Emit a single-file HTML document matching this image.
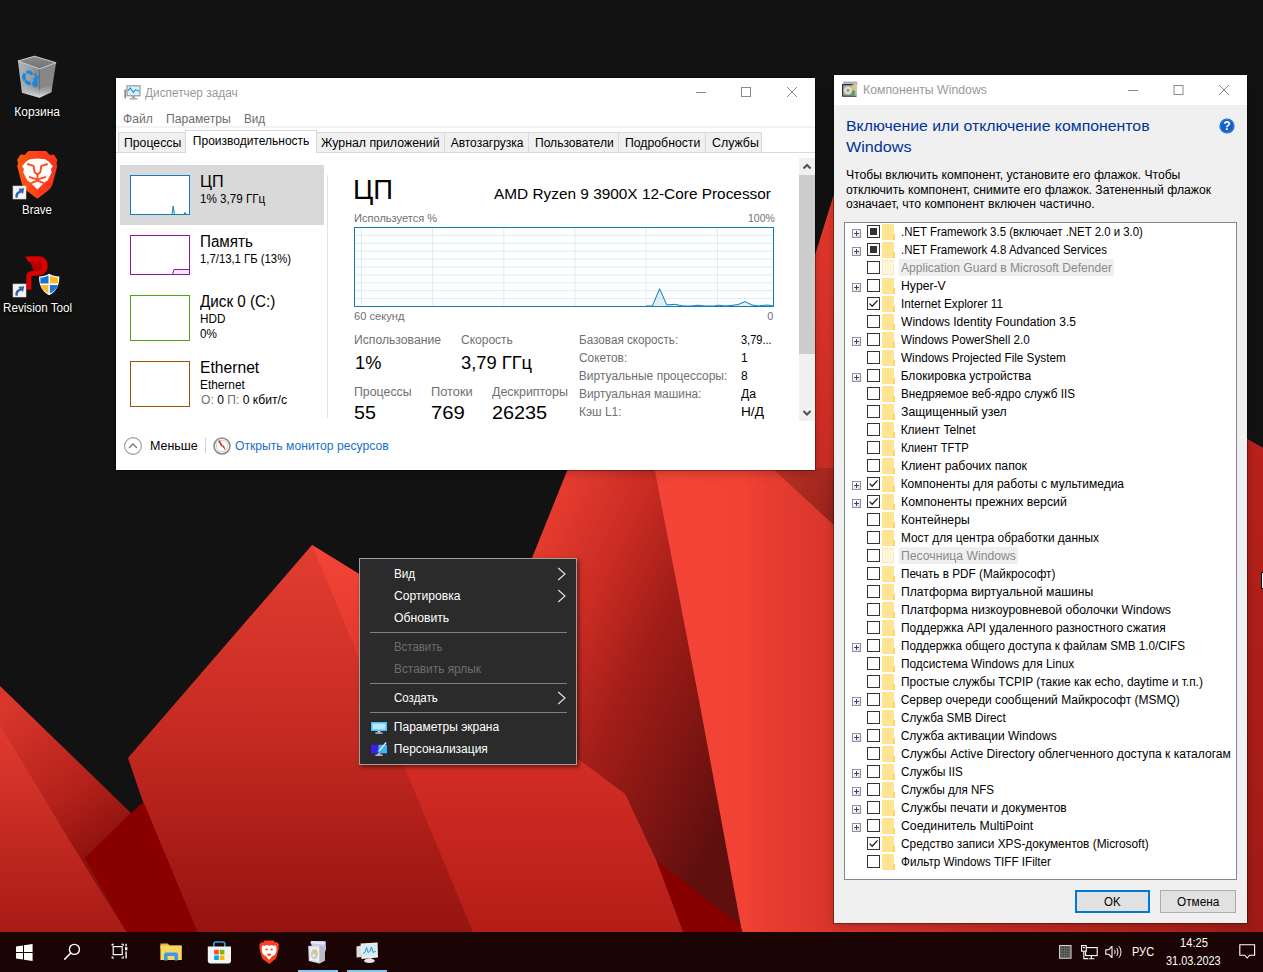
<!DOCTYPE html>
<html lang="ru"><head><meta charset="utf-8"><title>Desktop</title>
<style>
html,body{margin:0;padding:0}
body{width:1263px;height:972px;overflow:hidden;position:relative;background:#121212;
font-family:"Liberation Sans",sans-serif;font-size:12px;color:#000}
.a{position:absolute;box-sizing:border-box}
.t{position:absolute;white-space:nowrap;line-height:1;transform-origin:0 0}
svg{position:absolute;overflow:visible}
.win{position:absolute;box-sizing:border-box;background:#fff;box-shadow:0 0 0 1px rgba(0,0,0,.32),0 2px 10px rgba(0,0,0,.24)}
.ds{text-shadow:0 1px 2px rgba(0,0,0,.95),0 0 3px rgba(0,0,0,.8)}
</style></head>
<body>

<svg width="1263" height="972" viewBox="0 0 1263 972" style="left:0;top:0">
<defs>
<linearGradient id="gA" gradientUnits="userSpaceOnUse" x1="570" y1="480" x2="830" y2="605">
<stop offset="0" stop-color="#e53b2f"/><stop offset=".25" stop-color="#c92c23"/><stop offset=".5" stop-color="#a11d18"/><stop offset=".78" stop-color="#7c1512"/><stop offset="1" stop-color="#5e0f0e"/></linearGradient>
<linearGradient id="gB" gradientUnits="userSpaceOnUse" x1="660" y1="0" x2="1263" y2="0">
<stop offset="0" stop-color="#f34437"/><stop offset="0.141" stop-color="#f14235"/><stop offset="0.179" stop-color="#e73d31"/><stop offset="0.289" stop-color="#d9352b"/><stop offset="1" stop-color="#a31c16"/></linearGradient>
<linearGradient id="gD" gradientUnits="userSpaceOnUse" x1="800" y1="200" x2="860" y2="480">
<stop offset="0" stop-color="#e4382d"/><stop offset="1" stop-color="#c92c23"/></linearGradient>
<linearGradient id="gT" gradientUnits="userSpaceOnUse" x1="780" y1="470" x2="850" y2="520">
<stop offset="0" stop-color="#bb3025"/><stop offset="1" stop-color="#8e1f18"/></linearGradient>
<linearGradient id="gCR" gradientUnits="userSpaceOnUse" x1="0" y1="545" x2="0" y2="932">
<stop offset="0" stop-color="#f44437"/><stop offset=".45" stop-color="#da3129"/><stop offset="1" stop-color="#b41d17"/></linearGradient>
<linearGradient id="gCL" gradientUnits="userSpaceOnUse" x1="0" y1="545" x2="0" y2="932">
<stop offset="0" stop-color="#e33d31"/><stop offset=".5" stop-color="#c42a22"/><stop offset=".8" stop-color="#a81b16"/><stop offset="1" stop-color="#951411"/></linearGradient>
<linearGradient id="gLL" gradientUnits="userSpaceOnUse" x1="0" y1="720" x2="0" y2="932">
<stop offset="0" stop-color="#e23c30"/><stop offset="1" stop-color="#a81a15"/></linearGradient>
<linearGradient id="gLS" gradientUnits="userSpaceOnUse" x1="10" y1="700" x2="110" y2="850">
<stop offset="0" stop-color="#d9372c"/><stop offset=".6" stop-color="#b5221b"/><stop offset="1" stop-color="#8c100d"/></linearGradient>
<linearGradient id="gR2" gradientUnits="userSpaceOnUse" x1="1247" y1="440" x2="1247" y2="932">
<stop offset="0" stop-color="#b9211b"/><stop offset="1" stop-color="#a01a15"/></linearGradient>
</defs>
<rect width="1263" height="972" fill="#121212"/>
<!-- big right crystal -->
<polygon points="834,194 815,255 748,470 655,470 655,932 1263,932 1263,448 1247,439 1247,194" fill="url(#gD)"/>
<polygon points="650,468 1263,468 1263,932 738,932 695,700" fill="url(#gB)"/>
<polygon points="1247,439 1263,448 1263,932 1247,932" fill="url(#gR2)"/>
<polygon points="772,468 850,540 850,468" fill="url(#gT)"/>
<polygon points="575,452 651,452 655,471 699,700 742,932 738,928 650,864 619,798 572,764 492,656 532,558 567,471" fill="url(#gA)"/>
<!-- dark wedge bottom -->
<polygon points="650,858 656,860 740,925 742.5,932 677,932" fill="#870000"/>
<!-- central crystal -->
<polygon points="312,545 492,656 578,759 625,794 656,860 683,932 197,932 143,802 128,758" fill="url(#gCL)"/>
<polygon points="312,545 492,656 578,759 625,794 656,860 683,932 473,932" fill="url(#gCR)"/>
<!-- dark red between -->
<polygon points="131,813 143.5,802 197.5,932 126.5,932 85,858" fill="#8a0000"/>
<!-- left crystal -->
<polygon points="0,686 131,813 85,858 126.5,932 0,932" fill="url(#gLS)"/>
<path d="M0,726 C40,790 80,860 126.5,932 L0,932 Z" fill="url(#gLL)"/>
</svg>
<svg width="44" height="48" viewBox="14 52 44 48" style="left:14px;top:52px">
<defs>
<linearGradient id="rb1" x1="0" y1="0" x2="1" y2="0"><stop offset="0" stop-color="#bfc3c6"/><stop offset=".55" stop-color="#a9adb0"/><stop offset="1" stop-color="#8d9194"/></linearGradient>
<linearGradient id="rb2" x1="0" y1="0" x2="0" y2="1"><stop offset="0" stop-color="#8a8d90"/><stop offset="1" stop-color="#6f7275"/></linearGradient>
<linearGradient id="rb3" x1="0" y1="0" x2="0" y2="1"><stop offset="0" stop-color="#aeb2b5" stop-opacity="0"/><stop offset="1" stop-color="#e8eaec" stop-opacity=".9"/></linearGradient>
</defs>
<polygon points="17.9,61 39.5,68.9 39.5,97.7 22,92.7" fill="url(#rb1)" opacity=".92"/>
<polygon points="39.5,68.9 56.1,62.7 51.4,92.3 39.5,97.7" fill="#8f9396" opacity=".92"/>
<polygon points="20.8,84 39.5,89 52.4,84.5 51.4,92.3 39.5,97.7 22,92.7" fill="url(#rb3)"/>
<polygon points="17.9,61 34.6,56.2 56.1,62.7 39.5,68.9" fill="url(#rb2)" stroke="#d9dcde" stroke-width=".9" stroke-linejoin="round"/>
<g fill="#1687e0" transform="translate(29.6 79.2) scale(1.14) translate(-29.6 -78)" stroke="#1687e0" stroke-width=".5" stroke-linejoin="round">
<path d="M26.5 71.3 l3.6 -1 l2.6 3.2 l-2.2 .8 l-1.4 -1.7 l-1.7 .5 z"/>
<path d="M24.3 72.6 l-1.4 3.4 l1.6 3.6 l2 -1.3 l-.9 -2.3 l.9 -2.2 z"/>
<path d="M25.3 80.8 l2.9 2 l2.3 .2 l-.2 -2.6 l-2.3 -.6 l-1.4 -1 z"/>
<path d="M31.8 81.6 l1.6 3.2 l3.2 -1.2 l-.3 -4 l-2 -1.6 z"/>
<path d="M33.4 73.3 l1.8 3.2 l-2.6 1.1 l3.6 1.3 l1.3 -3.8 l-1.4 .6 l-1.2 -2.9 z"/>
</g>
</svg><div class="t ds" style="top:105.64px;font-size:12px;color:#fff;left:14.24px;">Корзина</div><svg width="42" height="49" viewBox="16 150 42 49" style="left:16px;top:150px">
<defs><linearGradient id="bv1" x1="0" y1="0" x2="1" y2="0"><stop offset="0" stop-color="#ff5a0a"/><stop offset=".5" stop-color="#fd3f1c"/><stop offset="1" stop-color="#f8311e"/></linearGradient></defs>
<path d="M28.3 151 L46.2 151 L49.8 155 L54 154.6 L57.4 160 L56.4 163.2 L57.3 166 L53 182.5 C52.2 186 50.5 188.8 47.5 191 L37.3 198.8 L27 191 C24 188.8 22.3 186 21.5 182.5 L17.2 166 L18.1 163.2 L17.1 160 L20.5 154.6 L24.7 155 Z" fill="url(#bv1)"/>
<polygon points="37.0,158.6 45.1,159.3 48.7,161.6 52.8,166.2 50.9,169.0 51.7,172.3 49.2,177.2 47.6,180.5 44.4,182.5 37.4,189.4 30.5,182.5 27.3,180.5 25.7,177.2 23.2,172.3 24.0,169.0 22.1,166.2 26.2,161.6 29.8,159.3" fill="#fff"/>
<path d="M27.2 164.0 L33.6 165.8 L34.6 172.3 L37.4 174.6 L40.3 172.3 L41.3 165.8 L47.7 164.0" stroke="#fb4a1c" stroke-width="1.9" fill="none" stroke-linejoin="round"/>
<path d="M37.4 174.6 L37.4 179.3" stroke="#fb4a1c" stroke-width="1.9" fill="none" stroke-linejoin="round"/>
<path d="M29.0 176.9 L37.4 179.7 L45.9 176.9" stroke="#fb4a1c" stroke-width="1.9" fill="none" stroke-linejoin="round"/>
<path d="M31.1 183.1 L37.4 180.7 L43.8 183.1" stroke="#fb4a1c" stroke-width="1.9" fill="none" stroke-linejoin="round"/>
</svg><svg width="13" height="13" viewBox="0 0 13 13" style="left:13px;top:186px">
<rect x="0" y="0" width="13" height="13" fill="#f4f4f4" stroke="#cfcfcf" stroke-width=".6"/>
<path d="M2.6 11.8 C1.8 8.2 3.4 5.8 6.6 4.8 L5.4 2.8 L11.2 2.2 L10 8 L8.4 6.4 C5.8 7 4.4 8.8 4.8 11.8 Z" fill="#2d64b3"/>
</svg><div class="t ds" style="top:203.54px;font-size:12px;color:#fff;left:22.26px;transform:scaleX(0.9569);">Brave</div><svg width="38" height="42" viewBox="23 255 38 42" style="left:23px;top:255px">
<path d="M25.1 256.6 L38 256.2 C44.5 256.4 47.9 260.4 47.7 266 C47.5 271.8 43.6 275.2 38.4 275.6 L33.4 275.8 C32 275.9 31.4 276.6 31.4 278 L31.4 289.8 L26.4 289.8 L26.4 276.6 C26.4 273 28.4 271 32 270.9 L36.8 270.7 C39.8 270.5 41.6 268.8 41.6 266.2 C41.6 263.4 39.8 261.8 36.8 261.8 L28.5 261.9 Z" fill="#dc0000"/>
<path d="M30.2 261.9 L36.8 261.8 C39.8 261.8 41.6 263.4 41.6 266.2 C41.6 268.8 39.8 270.5 36.8 270.7 L33.6 270.8 Z" fill="#b80000"/>
<path d="M49.2 273.8 C52.4 275.6 55.8 276.4 59.3 276.4 C59.6 285 56.4 291.4 49.2 295.2 C42 291.4 38.8 285 39.1 276.4 C42.6 276.4 46 275.6 49.2 273.8 Z" fill="#fff"/>
<path d="M48.5 275.4 C45.8 276.7 43.2 277.4 40.4 277.6 L40.4 283.6 L48.5 283.6 Z" fill="#1c73d4"/>
<path d="M49.9 275.4 C52.6 276.7 55.2 277.4 58 277.6 L58 283.6 L49.9 283.6 Z" fill="#fdb92a"/>
<path d="M40.5 285 L48.5 285 L48.5 293.6 C44 291.2 41.4 288.6 40.5 285 Z" fill="#fdb92a"/>
<path d="M57.9 285 L49.9 285 L49.9 293.6 C54.4 291.2 57 288.6 57.9 285 Z" fill="#1c73d4"/>
</svg><svg width="13" height="13" viewBox="0 0 13 13" style="left:13px;top:284px">
<rect x="0" y="0" width="13" height="13" fill="#f4f4f4" stroke="#cfcfcf" stroke-width=".6"/>
<path d="M2.6 11.8 C1.8 8.2 3.4 5.8 6.6 4.8 L5.4 2.8 L11.2 2.2 L10 8 L8.4 6.4 C5.8 7 4.4 8.8 4.8 11.8 Z" fill="#2d64b3"/>
</svg><div class="t ds" style="top:301.64px;font-size:12px;color:#fff;left:2.55px;transform:scaleX(0.9708);">Revision Tool</div><div class="win" style="left:116px;top:78px;width:699px;height:392px"></div><svg width="17" height="16" viewBox="0 0 17 16" style="left:124px;top:85px">
<rect x="0.3" y="4.5" width="1.8" height="8.8" fill="#8a9296"/>
<rect x="3" y="0.8" width="13" height="10" fill="#d7f0fa" stroke="#8a9296" stroke-width="1.1"/>
<path d="M4 5.6 l2.2 -2.6 l3 4.4 l2.4 -2.8 l3.4 1.6" stroke="#2a8fd0" stroke-width="1.1" fill="none"/>
<rect x="8" y="11.2" width="3" height="2" fill="#9aa2a6"/>
<rect x="5.5" y="13" width="8" height="1.6" fill="#aeb5b8"/>
</svg><div class="t" style="top:87.44px;font-size:12px;color:#999;left:145.24px;transform:scaleX(0.9872);">Диспетчер задач</div><svg width="120" height="20" viewBox="691 82 120 20" style="left:691px;top:82px"><path d="M696 92.5 h10" stroke="#8a8a8a" stroke-width="1" fill="none"/><rect x="741.5" y="87.5" width="9" height="9" stroke="#8a8a8a" stroke-width="1" fill="none"/><path d="M787 87 l10 10 M797 87 l-10 10" stroke="#8a8a8a" stroke-width="1" fill="none"/></svg><div class="t" style="top:112.74px;font-size:12px;color:#6d6d6d;left:123.24px;transform:scaleX(1.0065);">Файл</div><div class="t" style="top:112.74px;font-size:12px;color:#6d6d6d;left:165.84px;transform:scaleX(1.0113);">Параметры</div><div class="t" style="top:112.74px;font-size:12px;color:#6d6d6d;left:243.65px;transform:scaleX(0.9765);">Вид</div><div class="a" style="left:116px;top:126px;width:699px;height:2px;background:#f3f3f3"></div><div class="a" style="left:116px;top:152px;width:699px;height:1px;background:#d9d9d9"></div><div class="a" style="left:118px;top:132px;width:68px;height:21px;background:#f0f0f0;border:1px solid #d9d9d9"></div><div class="t" style="top:136.54px;font-size:12px;color:#000;left:124.13px;transform:scaleX(1.0211);">Процессы</div><div class="a" style="left:316px;top:132px;width:129px;height:21px;background:#f0f0f0;border:1px solid #d9d9d9"></div><div class="t" style="top:136.54px;font-size:12px;color:#000;left:320.63px;transform:scaleX(1.0274);">Журнал приложений</div><div class="a" style="left:444px;top:132px;width:85px;height:21px;background:#f0f0f0;border:1px solid #d9d9d9"></div><div class="t" style="top:136.54px;font-size:12px;color:#000;left:450.64px;">Автозагрузка</div><div class="a" style="left:528px;top:132px;width:91px;height:21px;background:#f0f0f0;border:1px solid #d9d9d9"></div><div class="t" style="top:136.54px;font-size:12px;color:#000;left:535.14px;transform:scaleX(1.0045);">Пользователи</div><div class="a" style="left:618px;top:132px;width:88px;height:21px;background:#f0f0f0;border:1px solid #d9d9d9"></div><div class="t" style="top:136.54px;font-size:12px;color:#000;left:624.93px;transform:scaleX(1.0207);">Подробности</div><div class="a" style="left:705px;top:132px;width:57px;height:21px;background:#f0f0f0;border:1px solid #d9d9d9"></div><div class="t" style="top:136.54px;font-size:12px;color:#000;left:711.93px;transform:scaleX(1.0292);">Службы</div><div class="a" style="left:185px;top:130px;width:132px;height:23px;background:#fff;border:1px solid #d9d9d9;border-bottom:none"></div><div class="t" style="top:134.54px;font-size:12px;color:#000;left:192.84px;">Производительность</div><div class="a" style="left:120px;top:165px;width:204px;height:60px;background:#d9d9d9"></div><div class="a" style="left:327px;top:175px;width:1px;height:243px;background:#e3e3e3"></div><div class="a" style="left:130px;top:175px;width:60px;height:40px;background:#fff;border:1px solid #117dbb"></div><svg width="60" height="40" viewBox="0 0 60 40" style="left:130px;top:175px">
<path d="M1 39.5 L42 39.5 L43.2 31 L44.4 39.5 L54 39.5 L55 37.4 L56 39.5 L59 39.5" stroke="#117dbb" stroke-width="1" fill="none"/></svg><div class="a" style="left:130px;top:235px;width:60px;height:40px;background:#fff;border:1px solid #8b12ae"></div><svg width="60" height="40" viewBox="0 0 60 40" style="left:130px;top:235px">
<path d="M42.5 39.5 L44 34.5 L59.5 34.5 L59.5 39.5 Z" fill="#f4e6f8" stroke="#8b12ae" stroke-width="1"/></svg><div class="a" style="left:130px;top:295px;width:60px;height:46px;background:#fff;border:1px solid #4da60c"></div><div class="a" style="left:130px;top:361px;width:60px;height:46px;background:#fff;border:1px solid #a74f01"></div><div class="t" style="top:174.46px;font-size:16px;color:#000;left:200.11px;transform:scaleX(1.0113);">ЦП</div><div class="t" style="top:193.24px;font-size:12px;color:#000;left:200.45px;transform:scaleX(0.9709);">1% 3,79 ГГц</div><div class="t" style="top:234.26px;font-size:16px;color:#000;left:200.14px;transform:scaleX(0.9493);">Память</div><div class="t" style="top:253.04px;font-size:12px;color:#000;left:200.46px;transform:scaleX(0.9435);">1,7/13,1 ГБ (13%)</div><div class="t" style="top:294.06px;font-size:16px;color:#000;left:200.14px;transform:scaleX(0.9518);">Диск 0 (C:)</div><div class="t" style="top:312.54px;font-size:12px;color:#000;left:200.45px;transform:scaleX(0.9768);">HDD</div><div class="t" style="top:327.64px;font-size:12px;color:#000;left:200.45px;transform:scaleX(0.9742);">0%</div><div class="t" style="top:360.06px;font-size:16px;color:#000;left:200.13px;transform:scaleX(0.9788);">Ethernet</div><div class="t" style="top:379.14px;font-size:12px;color:#000;left:200.44px;transform:scaleX(0.9873);">Ethernet</div><div class="t" style="left:200.8px;top:394.24px;font-size:12px;transform:scaleX(1.0088)"><span style="color:#707070">О:</span> 0 <span style="color:#707070">П:</span> 0 кбит/с</div><div class="a" style="left:799px;top:158px;width:16px;height:263px;background:#f0f0f0"></div><div class="a" style="left:799px;top:175px;width:16px;height:179px;background:#cdcdcd"></div><svg width="16" height="263" viewBox="0 0 16 263" style="left:799px;top:158px">
<path d="M4.5 10.5 L8 7 L11.5 10.5" stroke="#505050" stroke-width="2" fill="none"/>
<path d="M4.5 253 L8 256.5 L11.5 253" stroke="#505050" stroke-width="2" fill="none"/></svg><div class="t" style="top:177.04px;font-size:27px;color:#000;left:353.48px;transform:scaleX(1.0158);">ЦП</div><div class="t" style="top:186.96px;font-size:14.7px;color:#000;left:493.74px;transform:scaleX(1.0471);">AMD Ryzen 9 3900X 12-Core Processor</div><div class="t" style="top:212.89px;font-size:11px;color:#707070;left:353.97px;transform:scaleX(1.0056);">Используется %</div><div class="t" style="top:213.09px;font-size:11px;color:#707070;left:747.69px;transform:scaleX(0.9526);">100%</div><svg width="420" height="80" viewBox="354 227 420 80" style="left:354px;top:227px"><rect x="354.5" y="227.5" width="419" height="79" fill="#fff"/><path d="M355 235.4 H773" stroke="#dcecf6" stroke-width="1"/><path d="M355 243.3 H773" stroke="#dcecf6" stroke-width="1"/><path d="M355 251.2 H773" stroke="#dcecf6" stroke-width="1"/><path d="M355 259.1 H773" stroke="#dcecf6" stroke-width="1"/><path d="M355 267.0 H773" stroke="#dcecf6" stroke-width="1"/><path d="M355 274.9 H773" stroke="#dcecf6" stroke-width="1"/><path d="M355 282.8 H773" stroke="#dcecf6" stroke-width="1"/><path d="M355 290.7 H773" stroke="#dcecf6" stroke-width="1"/><path d="M355 298.6 H773" stroke="#dcecf6" stroke-width="1"/><path d="M361.4 228 V306" stroke="#dcecf6" stroke-width="1"/><path d="M432.6 228 V306" stroke="#dcecf6" stroke-width="1"/><path d="M503.8 228 V306" stroke="#dcecf6" stroke-width="1"/><path d="M575.0 228 V306" stroke="#dcecf6" stroke-width="1"/><path d="M646.2 228 V306" stroke="#dcecf6" stroke-width="1"/><path d="M717.4 228 V306" stroke="#dcecf6" stroke-width="1"/><path d="M646 306 L652.4 306 L659.6 288.7 L666.8 305 L674.9 304.3 L683 306 L692 306 L698 305.2 L704 306 L714 306 L719 305.2 L724 306 L730 305.6 L738 304.6 L745 301.6 L752 305 L758 306 L763 305.4 L768 305 L773 306 L773 306.5 L646 306.5 Z" fill="#117dbb" fill-opacity=".12" stroke="none"/><path d="M646 306 L652.4 306 L659.6 288.7 L666.8 305 L674.9 304.3 L683 306 L692 306 L698 305.2 L704 306 L714 306 L719 305.2 L724 306 L730 305.6 L738 304.6 L745 301.6 L752 305 L758 306 L763 305.4 L768 305 L773 306" stroke="#117dbb" stroke-width="1" fill="none"/><rect x="354.5" y="227.5" width="419" height="79" fill="none" stroke="#117dbb" stroke-width="1"/></svg><div class="t" style="top:310.69px;font-size:11px;color:#707070;left:353.97px;transform:scaleX(1.0113);">60 секунд</div><div class="t" style="top:310.69px;font-size:11px;color:#707070;left:767.17px;">0</div><div class="t" style="top:334.44px;font-size:12px;color:#707070;left:353.93px;transform:scaleX(1.0143);">Использование</div><div class="t" style="top:334.44px;font-size:12px;color:#707070;left:461.04px;">Скорость</div><div class="t" style="top:353.97px;font-size:18.7px;color:#000;left:354.95px;transform:scaleX(0.9756);">1%</div><div class="t" style="top:353.97px;font-size:18.7px;color:#000;left:460.85px;transform:scaleX(0.9808);">3,79 ГГц</div><div class="t" style="top:386.14px;font-size:12px;color:#707070;left:353.93px;transform:scaleX(1.0282);">Процессы</div><div class="t" style="top:386.14px;font-size:12px;color:#707070;left:431.12px;transform:scaleX(1.0684);">Потоки</div><div class="t" style="top:386.14px;font-size:12px;color:#707070;left:491.83px;transform:scaleX(1.0358);">Дескрипторы</div><div class="t" style="top:403.97px;font-size:18.7px;color:#000;left:354.41px;transform:scaleX(1.0513);">55</div><div class="t" style="top:403.97px;font-size:18.7px;color:#000;left:431.39px;transform:scaleX(1.0854);">769</div><div class="t" style="top:403.97px;font-size:18.7px;color:#000;left:492.00px;transform:scaleX(1.0608);">26235</div><div class="t" style="top:333.84px;font-size:12px;color:#707070;left:578.85px;transform:scaleX(0.9752);">Базовая скорость:</div><div class="t" style="top:333.84px;font-size:12px;color:#000;left:741.07px;transform:scaleX(0.9170);">3,79...</div><div class="t" style="top:351.84px;font-size:12px;color:#707070;left:578.84px;transform:scaleX(0.9886);">Сокетов:</div><div class="t" style="top:351.84px;font-size:12px;color:#000;left:741.04px;">1</div><div class="t" style="top:369.84px;font-size:12px;color:#707070;left:578.84px;">Виртуальные процессоры:</div><div class="t" style="top:369.84px;font-size:12px;color:#000;left:741.04px;">8</div><div class="t" style="top:387.84px;font-size:12px;color:#707070;left:578.84px;transform:scaleX(0.9903);">Виртуальная машина:</div><div class="t" style="top:387.84px;font-size:12px;color:#000;left:741.04px;transform:scaleX(1.0064);">Да</div><div class="t" style="top:405.84px;font-size:12px;color:#707070;left:578.84px;transform:scaleX(0.9937);">Кэш L1:</div><div class="t" style="top:405.84px;font-size:12px;color:#000;left:740.99px;transform:scaleX(1.1374);">Н/Д</div><svg width="20" height="20" viewBox="0 0 20 20" style="left:122.8px;top:436px">
<circle cx="10" cy="10" r="8.4" fill="#fff" stroke="#9a9a9a" stroke-width="1.1"/>
<path d="M6 12 L10 8 L14 12" stroke="#7a7a7a" stroke-width="1.3" fill="none"/></svg><div class="t" style="top:440.14px;font-size:12px;color:#000;left:150.13px;transform:scaleX(1.0370);">Меньше</div><div class="a" style="left:205px;top:438px;width:1px;height:15px;background:#d0d0d0"></div><svg width="18" height="18" viewBox="0 0 18 18" style="left:213px;top:437px">
<circle cx="9" cy="9" r="8" fill="#f4f4f4" stroke="#8c8c8c" stroke-width="1.6"/>
<circle cx="9" cy="9" r="5.6" fill="#fff" stroke="#c9c9c9" stroke-width=".8"/>
<path d="M9 9 L6 3.6" stroke="#c22" stroke-width="1.6"/>
<path d="M9 9 L12.6 13.6 L11 8.6 Z" fill="#c22"/>
</svg><div class="t" style="top:440.14px;font-size:12px;color:#1a6fc4;left:235.04px;transform:scaleX(1.0121);">Открыть монитор ресурсов</div><div class="win" style="left:834px;top:75px;width:413px;height:848px;background:#f0f0f0"></div><div class="a" style="left:834px;top:75px;width:413px;height:30px;background:#fff"></div><svg width="16" height="16" viewBox="0 0 16 16" style="left:842px;top:81px">
<path d="M2 1 L14.6 1 L15 4 L1.6 4 Z" fill="#b7b9d2" stroke="#7e8199" stroke-width=".6"/>
<rect x=".6" y="3.6" width="13.4" height="11.6" fill="#9da396" stroke="#2a2c28" stroke-width="1.1"/>
<rect x="11.6" y="3" width="3.6" height="11.6" fill="#c2c4d6"/>
<rect x="9.6" y="3.8" width="3.4" height="5" fill="#e3c94c"/>
<rect x="9.4" y="9.6" width="3.8" height="4.6" fill="#5da053"/>
<circle cx="6" cy="9.4" r="4.2" fill="#d9dcd6"/><circle cx="6" cy="9.4" r="1.3" fill="#8b9088"/>
</svg><div class="t" style="top:84.34px;font-size:12px;color:#999;left:862.93px;transform:scaleX(1.0225);">Компоненты Windows</div><svg width="120" height="20" viewBox="1123 79.5 120 20" style="left:1123px;top:79.5px"><path d="M1128 90.0 h10" stroke="#8a8a8a" stroke-width="1" fill="none"/><rect x="1174.0" y="85.0" width="9" height="9" stroke="#8a8a8a" stroke-width="1" fill="none"/><path d="M1219 84.5 l10 10 M1229 84.5 l-10 10" stroke="#8a8a8a" stroke-width="1" fill="none"/></svg><div class="t" style="top:119.36px;font-size:14.7px;color:#003399;left:846.03px;transform:scaleX(1.0771);">Включение или отключение компонентов</div><div class="t" style="top:139.96px;font-size:14.7px;color:#003399;left:846.02px;transform:scaleX(1.0996);">Windows</div><svg width="16" height="16" viewBox="0 0 16 16" style="left:1219px;top:118px">
<circle cx="8" cy="8" r="7.6" fill="#1460c8"/><circle cx="8" cy="8" r="6.6" fill="none" stroke="#3f86e0" stroke-width=".8"/>
<text x="8" y="12.2" font-family="Liberation Sans, sans-serif" font-size="12" font-weight="bold" fill="#fff" text-anchor="middle">?</text></svg><div class="t" style="top:169.04px;font-size:12px;color:#000;left:846.14px;transform:scaleX(1.0115);">Чтобы включить компонент, установите его флажок. Чтобы</div><div class="t" style="top:183.54px;font-size:12px;color:#000;left:846.13px;transform:scaleX(1.0147);">отключить компонент, снимите его флажок. Затененный флажок</div><div class="t" style="top:198.14px;font-size:12px;color:#000;left:846.13px;transform:scaleX(1.0216);">означает, что компонент включен частично.</div><div class="a" style="left:844px;top:222px;width:393px;height:658px;background:#fff;border:1px solid #828790"></div><div class="a" style="left:852px;top:229px;width:9px;height:9px;border:1px solid #919191;background:linear-gradient(135deg,#fff 30%,#d6d6d6)"></div><div class="a" style="left:854px;top:233px;width:5px;height:1px;background:#34457a"></div><div class="a" style="left:856px;top:231px;width:1px;height:5px;background:#34457a"></div><div class="a" style="left:867px;top:225px;width:13px;height:13px;background:#fff;border:1px solid #333"></div><div class="a" style="left:870px;top:228px;width:7px;height:7px;background:#333"></div><div class="a" style="left:882px;top:224px;width:11.8px;height:15.5px;background:#ffe492"></div><div class="a" style="left:893px;top:233.5px;width:1.8px;height:6px;background:#ffd65f"></div><div class="t" style="top:226.14px;font-size:12px;color:#000;left:900.66px;transform:scaleX(0.9502);">.NET Framework 3.5 (включает .NET 2.0 и 3.0)</div><div class="a" style="left:852px;top:247px;width:9px;height:9px;border:1px solid #919191;background:linear-gradient(135deg,#fff 30%,#d6d6d6)"></div><div class="a" style="left:854px;top:251px;width:5px;height:1px;background:#34457a"></div><div class="a" style="left:856px;top:249px;width:1px;height:5px;background:#34457a"></div><div class="a" style="left:867px;top:243px;width:13px;height:13px;background:#fff;border:1px solid #333"></div><div class="a" style="left:870px;top:246px;width:7px;height:7px;background:#333"></div><div class="a" style="left:882px;top:242px;width:11.8px;height:15.5px;background:#ffe492"></div><div class="a" style="left:893px;top:251.5px;width:1.8px;height:6px;background:#ffd65f"></div><div class="t" style="top:244.14px;font-size:12px;color:#000;left:900.66px;transform:scaleX(0.9536);">.NET Framework 4.8 Advanced Services</div><div class="a" style="left:867px;top:261px;width:13px;height:13px;background:#fff;border:1px solid #333"></div><div class="a" style="left:882px;top:260px;width:12px;height:15px;background:#fff6da;border:1px dotted #f3dc97"></div><div class="a" style="left:899px;top:259px;width:214.8px;height:17px;background:#efefef"></div><div class="t" style="top:262.14px;font-size:12px;color:#8a8a8a;left:900.64px;transform:scaleX(1.0054);">Application Guard в Microsoft Defender</div><div class="a" style="left:852px;top:283px;width:9px;height:9px;border:1px solid #919191;background:linear-gradient(135deg,#fff 30%,#d6d6d6)"></div><div class="a" style="left:854px;top:287px;width:5px;height:1px;background:#34457a"></div><div class="a" style="left:856px;top:285px;width:1px;height:5px;background:#34457a"></div><div class="a" style="left:867px;top:279px;width:13px;height:13px;background:#fff;border:1px solid #333"></div><div class="a" style="left:882px;top:278px;width:11.8px;height:15.5px;background:#ffe492"></div><div class="a" style="left:893px;top:287.5px;width:1.8px;height:6px;background:#ffd65f"></div><div class="t" style="top:280.14px;font-size:12px;color:#000;left:900.63px;transform:scaleX(1.0155);">Hyper-V</div><div class="a" style="left:867px;top:297px;width:13px;height:13px;background:#fff;border:1px solid #333"></div><svg width="13" height="13" viewBox="0 0 13 13" style="left:867px;top:297px"><path d="M2.6 6.6 L5.2 9.3 L10.6 3.4" stroke="#222" stroke-width="1.35" fill="none"/></svg><div class="a" style="left:882px;top:296px;width:11.8px;height:15.5px;background:#ffe492"></div><div class="a" style="left:893px;top:305.5px;width:1.8px;height:6px;background:#ffd65f"></div><div class="t" style="top:298.14px;font-size:12px;color:#000;left:900.65px;transform:scaleX(0.9758);">Internet Explorer 11</div><div class="a" style="left:867px;top:315px;width:13px;height:13px;background:#fff;border:1px solid #333"></div><div class="a" style="left:882px;top:314px;width:11.8px;height:15.5px;background:#ffe492"></div><div class="a" style="left:893px;top:323.5px;width:1.8px;height:6px;background:#ffd65f"></div><div class="t" style="top:316.14px;font-size:12px;color:#000;left:900.64px;transform:scaleX(1.0048);">Windows Identity Foundation 3.5</div><div class="a" style="left:852px;top:337px;width:9px;height:9px;border:1px solid #919191;background:linear-gradient(135deg,#fff 30%,#d6d6d6)"></div><div class="a" style="left:854px;top:341px;width:5px;height:1px;background:#34457a"></div><div class="a" style="left:856px;top:339px;width:1px;height:5px;background:#34457a"></div><div class="a" style="left:867px;top:333px;width:13px;height:13px;background:#fff;border:1px solid #333"></div><div class="a" style="left:882px;top:332px;width:11.8px;height:15.5px;background:#ffe492"></div><div class="a" style="left:893px;top:341.5px;width:1.8px;height:6px;background:#ffd65f"></div><div class="t" style="top:334.14px;font-size:12px;color:#000;left:900.65px;transform:scaleX(0.9694);">Windows PowerShell 2.0</div><div class="a" style="left:867px;top:351px;width:13px;height:13px;background:#fff;border:1px solid #333"></div><div class="a" style="left:882px;top:350px;width:11.8px;height:15.5px;background:#ffe492"></div><div class="a" style="left:893px;top:359.5px;width:1.8px;height:6px;background:#ffd65f"></div><div class="t" style="top:352.14px;font-size:12px;color:#000;left:900.65px;transform:scaleX(0.9759);">Windows Projected File System</div><div class="a" style="left:852px;top:373px;width:9px;height:9px;border:1px solid #919191;background:linear-gradient(135deg,#fff 30%,#d6d6d6)"></div><div class="a" style="left:854px;top:377px;width:5px;height:1px;background:#34457a"></div><div class="a" style="left:856px;top:375px;width:1px;height:5px;background:#34457a"></div><div class="a" style="left:867px;top:369px;width:13px;height:13px;background:#fff;border:1px solid #333"></div><div class="a" style="left:882px;top:368px;width:11.8px;height:15.5px;background:#ffe492"></div><div class="a" style="left:893px;top:377.5px;width:1.8px;height:6px;background:#ffd65f"></div><div class="t" style="top:370.14px;font-size:12px;color:#000;left:900.64px;">Блокировка устройства</div><div class="a" style="left:867px;top:387px;width:13px;height:13px;background:#fff;border:1px solid #333"></div><div class="a" style="left:882px;top:386px;width:11.8px;height:15.5px;background:#ffe492"></div><div class="a" style="left:893px;top:395.5px;width:1.8px;height:6px;background:#ffd65f"></div><div class="t" style="top:388.14px;font-size:12px;color:#000;left:900.65px;transform:scaleX(0.9734);">Внедряемое веб-ядро служб IIS</div><div class="a" style="left:867px;top:405px;width:13px;height:13px;background:#fff;border:1px solid #333"></div><div class="a" style="left:882px;top:404px;width:11.8px;height:15.5px;background:#ffe492"></div><div class="a" style="left:893px;top:413.5px;width:1.8px;height:6px;background:#ffd65f"></div><div class="t" style="top:406.14px;font-size:12px;color:#000;left:900.63px;transform:scaleX(1.0223);">Защищенный узел</div><div class="a" style="left:867px;top:423px;width:13px;height:13px;background:#fff;border:1px solid #333"></div><div class="a" style="left:882px;top:422px;width:11.8px;height:15.5px;background:#ffe492"></div><div class="a" style="left:893px;top:431.5px;width:1.8px;height:6px;background:#ffd65f"></div><div class="t" style="top:424.14px;font-size:12px;color:#000;left:900.64px;">Клиент Telnet</div><div class="a" style="left:867px;top:441px;width:13px;height:13px;background:#fff;border:1px solid #333"></div><div class="a" style="left:882px;top:440px;width:11.8px;height:15.5px;background:#ffe492"></div><div class="a" style="left:893px;top:449.5px;width:1.8px;height:6px;background:#ffd65f"></div><div class="t" style="top:442.14px;font-size:12px;color:#000;left:900.67px;transform:scaleX(0.9295);">Клиент TFTP</div><div class="a" style="left:867px;top:459px;width:13px;height:13px;background:#fff;border:1px solid #333"></div><div class="a" style="left:882px;top:458px;width:11.8px;height:15.5px;background:#ffe492"></div><div class="a" style="left:893px;top:467.5px;width:1.8px;height:6px;background:#ffd65f"></div><div class="t" style="top:460.14px;font-size:12px;color:#000;left:900.63px;transform:scaleX(1.0213);">Клиент рабочих папок</div><div class="a" style="left:852px;top:481px;width:9px;height:9px;border:1px solid #919191;background:linear-gradient(135deg,#fff 30%,#d6d6d6)"></div><div class="a" style="left:854px;top:485px;width:5px;height:1px;background:#34457a"></div><div class="a" style="left:856px;top:483px;width:1px;height:5px;background:#34457a"></div><div class="a" style="left:867px;top:477px;width:13px;height:13px;background:#fff;border:1px solid #333"></div><svg width="13" height="13" viewBox="0 0 13 13" style="left:867px;top:477px"><path d="M2.6 6.6 L5.2 9.3 L10.6 3.4" stroke="#222" stroke-width="1.35" fill="none"/></svg><div class="a" style="left:882px;top:476px;width:11.8px;height:15.5px;background:#ffe492"></div><div class="a" style="left:893px;top:485.5px;width:1.8px;height:6px;background:#ffd65f"></div><div class="t" style="top:478.14px;font-size:12px;color:#000;left:900.64px;">Компоненты для работы с мультимедиа</div><div class="a" style="left:852px;top:499px;width:9px;height:9px;border:1px solid #919191;background:linear-gradient(135deg,#fff 30%,#d6d6d6)"></div><div class="a" style="left:854px;top:503px;width:5px;height:1px;background:#34457a"></div><div class="a" style="left:856px;top:501px;width:1px;height:5px;background:#34457a"></div><div class="a" style="left:867px;top:495px;width:13px;height:13px;background:#fff;border:1px solid #333"></div><svg width="13" height="13" viewBox="0 0 13 13" style="left:867px;top:495px"><path d="M2.6 6.6 L5.2 9.3 L10.6 3.4" stroke="#222" stroke-width="1.35" fill="none"/></svg><div class="a" style="left:882px;top:494px;width:11.8px;height:15.5px;background:#ffe492"></div><div class="a" style="left:893px;top:503.5px;width:1.8px;height:6px;background:#ffd65f"></div><div class="t" style="top:496.14px;font-size:12px;color:#000;left:900.63px;transform:scaleX(1.0241);">Компоненты прежних версий</div><div class="a" style="left:867px;top:513px;width:13px;height:13px;background:#fff;border:1px solid #333"></div><div class="a" style="left:882px;top:512px;width:11.8px;height:15.5px;background:#ffe492"></div><div class="a" style="left:893px;top:521.5px;width:1.8px;height:6px;background:#ffd65f"></div><div class="t" style="top:514.14px;font-size:12px;color:#000;left:900.63px;transform:scaleX(1.0156);">Контейнеры</div><div class="a" style="left:867px;top:531px;width:13px;height:13px;background:#fff;border:1px solid #333"></div><div class="a" style="left:882px;top:530px;width:11.8px;height:15.5px;background:#ffe492"></div><div class="a" style="left:893px;top:539.5px;width:1.8px;height:6px;background:#ffd65f"></div><div class="t" style="top:532.14px;font-size:12px;color:#000;left:900.64px;transform:scaleX(0.9887);">Мост для центра обработки данных</div><div class="a" style="left:867px;top:549px;width:13px;height:13px;background:#fff;border:1px solid #333"></div><div class="a" style="left:882px;top:548px;width:12px;height:15px;background:#fff6da;border:1px dotted #f3dc97"></div><div class="a" style="left:899px;top:547px;width:118.8px;height:17px;background:#efefef"></div><div class="t" style="top:550.14px;font-size:12px;color:#8a8a8a;left:900.63px;transform:scaleX(1.0176);">Песочница Windows</div><div class="a" style="left:867px;top:567px;width:13px;height:13px;background:#fff;border:1px solid #333"></div><div class="a" style="left:882px;top:566px;width:11.8px;height:15.5px;background:#ffe492"></div><div class="a" style="left:893px;top:575.5px;width:1.8px;height:6px;background:#ffd65f"></div><div class="t" style="top:568.14px;font-size:12px;color:#000;left:900.65px;transform:scaleX(0.9789);">Печать в PDF (Майкрософт)</div><div class="a" style="left:867px;top:585px;width:13px;height:13px;background:#fff;border:1px solid #333"></div><div class="a" style="left:882px;top:584px;width:11.8px;height:15.5px;background:#ffe492"></div><div class="a" style="left:893px;top:593.5px;width:1.8px;height:6px;background:#ffd65f"></div><div class="t" style="top:586.14px;font-size:12px;color:#000;left:900.64px;transform:scaleX(1.0126);">Платформа виртуальной машины</div><div class="a" style="left:867px;top:603px;width:13px;height:13px;background:#fff;border:1px solid #333"></div><div class="a" style="left:882px;top:602px;width:11.8px;height:15.5px;background:#ffe492"></div><div class="a" style="left:893px;top:611.5px;width:1.8px;height:6px;background:#ffd65f"></div><div class="t" style="top:604.14px;font-size:12px;color:#000;left:900.63px;transform:scaleX(1.0173);">Платформа низкоуровневой оболочки Windows</div><div class="a" style="left:867px;top:621px;width:13px;height:13px;background:#fff;border:1px solid #333"></div><div class="a" style="left:882px;top:620px;width:11.8px;height:15.5px;background:#ffe492"></div><div class="a" style="left:893px;top:629.5px;width:1.8px;height:6px;background:#ffd65f"></div><div class="t" style="top:622.14px;font-size:12px;color:#000;left:900.64px;transform:scaleX(0.9959);">Поддержка API удаленного разностного сжатия</div><div class="a" style="left:852px;top:643px;width:9px;height:9px;border:1px solid #919191;background:linear-gradient(135deg,#fff 30%,#d6d6d6)"></div><div class="a" style="left:854px;top:647px;width:5px;height:1px;background:#34457a"></div><div class="a" style="left:856px;top:645px;width:1px;height:5px;background:#34457a"></div><div class="a" style="left:867px;top:639px;width:13px;height:13px;background:#fff;border:1px solid #333"></div><div class="a" style="left:882px;top:638px;width:11.8px;height:15.5px;background:#ffe492"></div><div class="a" style="left:893px;top:647.5px;width:1.8px;height:6px;background:#ffd65f"></div><div class="t" style="top:640.14px;font-size:12px;color:#000;left:900.65px;transform:scaleX(0.9737);">Поддержка общего доступа к файлам SMB 1.0/CIFS</div><div class="a" style="left:867px;top:657px;width:13px;height:13px;background:#fff;border:1px solid #333"></div><div class="a" style="left:882px;top:656px;width:11.8px;height:15.5px;background:#ffe492"></div><div class="a" style="left:893px;top:665.5px;width:1.8px;height:6px;background:#ffd65f"></div><div class="t" style="top:658.14px;font-size:12px;color:#000;left:900.64px;transform:scaleX(0.9868);">Подсистема Windows для Linux</div><div class="a" style="left:867px;top:675px;width:13px;height:13px;background:#fff;border:1px solid #333"></div><div class="a" style="left:882px;top:674px;width:11.8px;height:15.5px;background:#ffe492"></div><div class="a" style="left:893px;top:683.5px;width:1.8px;height:6px;background:#ffd65f"></div><div class="t" style="top:676.14px;font-size:12px;color:#000;left:900.64px;transform:scaleX(0.9901);">Простые службы TCPIP (такие как echo, daytime и т.п.)</div><div class="a" style="left:852px;top:697px;width:9px;height:9px;border:1px solid #919191;background:linear-gradient(135deg,#fff 30%,#d6d6d6)"></div><div class="a" style="left:854px;top:701px;width:5px;height:1px;background:#34457a"></div><div class="a" style="left:856px;top:699px;width:1px;height:5px;background:#34457a"></div><div class="a" style="left:867px;top:693px;width:13px;height:13px;background:#fff;border:1px solid #333"></div><div class="a" style="left:882px;top:692px;width:11.8px;height:15.5px;background:#ffe492"></div><div class="a" style="left:893px;top:701.5px;width:1.8px;height:6px;background:#ffd65f"></div><div class="t" style="top:694.14px;font-size:12px;color:#000;left:900.64px;">Сервер очереди сообщений Майкрософт (MSMQ)</div><div class="a" style="left:867px;top:711px;width:13px;height:13px;background:#fff;border:1px solid #333"></div><div class="a" style="left:882px;top:710px;width:11.8px;height:15.5px;background:#ffe492"></div><div class="a" style="left:893px;top:719.5px;width:1.8px;height:6px;background:#ffd65f"></div><div class="t" style="top:712.14px;font-size:12px;color:#000;left:900.65px;transform:scaleX(0.9760);">Служба SMB Direct</div><div class="a" style="left:852px;top:733px;width:9px;height:9px;border:1px solid #919191;background:linear-gradient(135deg,#fff 30%,#d6d6d6)"></div><div class="a" style="left:854px;top:737px;width:5px;height:1px;background:#34457a"></div><div class="a" style="left:856px;top:735px;width:1px;height:5px;background:#34457a"></div><div class="a" style="left:867px;top:729px;width:13px;height:13px;background:#fff;border:1px solid #333"></div><div class="a" style="left:882px;top:728px;width:11.8px;height:15.5px;background:#ffe492"></div><div class="a" style="left:893px;top:737.5px;width:1.8px;height:6px;background:#ffd65f"></div><div class="t" style="top:730.14px;font-size:12px;color:#000;left:900.64px;">Служба активации Windows</div><div class="a" style="left:867px;top:747px;width:13px;height:13px;background:#fff;border:1px solid #333"></div><div class="a" style="left:882px;top:746px;width:11.8px;height:15.5px;background:#ffe492"></div><div class="a" style="left:893px;top:755.5px;width:1.8px;height:6px;background:#ffd65f"></div><div class="t" style="top:748.14px;font-size:12px;color:#000;left:900.64px;transform:scaleX(1.0077);">Службы Active Directory облегченного доступа к каталогам</div><div class="a" style="left:852px;top:769px;width:9px;height:9px;border:1px solid #919191;background:linear-gradient(135deg,#fff 30%,#d6d6d6)"></div><div class="a" style="left:854px;top:773px;width:5px;height:1px;background:#34457a"></div><div class="a" style="left:856px;top:771px;width:1px;height:5px;background:#34457a"></div><div class="a" style="left:867px;top:765px;width:13px;height:13px;background:#fff;border:1px solid #333"></div><div class="a" style="left:882px;top:764px;width:11.8px;height:15.5px;background:#ffe492"></div><div class="a" style="left:893px;top:773.5px;width:1.8px;height:6px;background:#ffd65f"></div><div class="t" style="top:766.14px;font-size:12px;color:#000;left:900.65px;transform:scaleX(0.9750);">Службы IIS</div><div class="a" style="left:852px;top:787px;width:9px;height:9px;border:1px solid #919191;background:linear-gradient(135deg,#fff 30%,#d6d6d6)"></div><div class="a" style="left:854px;top:791px;width:5px;height:1px;background:#34457a"></div><div class="a" style="left:856px;top:789px;width:1px;height:5px;background:#34457a"></div><div class="a" style="left:867px;top:783px;width:13px;height:13px;background:#fff;border:1px solid #333"></div><div class="a" style="left:882px;top:782px;width:11.8px;height:15.5px;background:#ffe492"></div><div class="a" style="left:893px;top:791.5px;width:1.8px;height:6px;background:#ffd65f"></div><div class="t" style="top:784.14px;font-size:12px;color:#000;left:900.65px;transform:scaleX(0.9632);">Службы для NFS</div><div class="a" style="left:852px;top:805px;width:9px;height:9px;border:1px solid #919191;background:linear-gradient(135deg,#fff 30%,#d6d6d6)"></div><div class="a" style="left:854px;top:809px;width:5px;height:1px;background:#34457a"></div><div class="a" style="left:856px;top:807px;width:1px;height:5px;background:#34457a"></div><div class="a" style="left:867px;top:801px;width:13px;height:13px;background:#fff;border:1px solid #333"></div><div class="a" style="left:882px;top:800px;width:11.8px;height:15.5px;background:#ffe492"></div><div class="a" style="left:893px;top:809.5px;width:1.8px;height:6px;background:#ffd65f"></div><div class="t" style="top:802.14px;font-size:12px;color:#000;left:900.64px;transform:scaleX(1.0065);">Службы печати и документов</div><div class="a" style="left:852px;top:823px;width:9px;height:9px;border:1px solid #919191;background:linear-gradient(135deg,#fff 30%,#d6d6d6)"></div><div class="a" style="left:854px;top:827px;width:5px;height:1px;background:#34457a"></div><div class="a" style="left:856px;top:825px;width:1px;height:5px;background:#34457a"></div><div class="a" style="left:867px;top:819px;width:13px;height:13px;background:#fff;border:1px solid #333"></div><div class="a" style="left:882px;top:818px;width:11.8px;height:15.5px;background:#ffe492"></div><div class="a" style="left:893px;top:827.5px;width:1.8px;height:6px;background:#ffd65f"></div><div class="t" style="top:820.14px;font-size:12px;color:#000;left:900.63px;transform:scaleX(1.0190);">Соединитель MultiPoint</div><div class="a" style="left:867px;top:837px;width:13px;height:13px;background:#fff;border:1px solid #333"></div><svg width="13" height="13" viewBox="0 0 13 13" style="left:867px;top:837px"><path d="M2.6 6.6 L5.2 9.3 L10.6 3.4" stroke="#222" stroke-width="1.35" fill="none"/></svg><div class="a" style="left:882px;top:836px;width:11.8px;height:15.5px;background:#ffe492"></div><div class="a" style="left:893px;top:845.5px;width:1.8px;height:6px;background:#ffd65f"></div><div class="t" style="top:838.14px;font-size:12px;color:#000;left:900.64px;transform:scaleX(0.9874);">Средство записи XPS-документов (Microsoft)</div><div class="a" style="left:867px;top:855px;width:13px;height:13px;background:#fff;border:1px solid #333"></div><div class="a" style="left:882px;top:854px;width:11.8px;height:15.5px;background:#ffe492"></div><div class="a" style="left:893px;top:863.5px;width:1.8px;height:6px;background:#ffd65f"></div><div class="t" style="top:856.14px;font-size:12px;color:#000;left:900.65px;transform:scaleX(0.9731);">Фильтр Windows TIFF IFilter</div><div class="a" style="left:1075px;top:890px;width:75px;height:23px;background:#e1e1e1;border:2px solid #0078d7"></div><div class="t" style="top:895.84px;font-size:12px;color:#000;left:1103.96px;transform:scaleX(0.9573);">OK</div><div class="a" style="left:1160px;top:890px;width:76px;height:23px;background:#e1e1e1;border:1px solid #adadad"></div><div class="t" style="top:895.84px;font-size:12px;color:#000;left:1176.95px;transform:scaleX(0.9823);">Отмена</div><div class="a" style="left:359px;top:558px;width:218px;height:207px;background:#2b2b2b;border:1px solid #a0a0a0;box-shadow:2px 2px 4px rgba(0,0,0,.5)"></div><div class="t" style="top:567.64px;font-size:12px;color:#fff;left:393.85px;transform:scaleX(0.9765);">Вид</div><div class="t" style="top:589.84px;font-size:12px;color:#fff;left:393.84px;transform:scaleX(1.0110);">Сортировка</div><div class="t" style="top:611.54px;font-size:12px;color:#fff;left:393.83px;transform:scaleX(1.0158);">Обновить</div><div class="a" style="left:370px;top:632px;width:197px;height:1px;background:#808080"></div><div class="t" style="top:641.04px;font-size:12px;color:#6d6d6d;left:393.86px;transform:scaleX(0.9514);">Вставить</div><div class="t" style="top:662.64px;font-size:12px;color:#6d6d6d;left:393.84px;transform:scaleX(0.9903);">Вставить ярлык</div><div class="a" style="left:370px;top:683px;width:197px;height:1px;background:#808080"></div><div class="t" style="top:691.74px;font-size:12px;color:#fff;left:393.85px;transform:scaleX(0.9601);">Создать</div><div class="a" style="left:370px;top:712px;width:197px;height:1px;background:#808080"></div><div class="t" style="top:721.34px;font-size:12px;color:#fff;left:393.84px;">Параметры экрана</div><div class="t" style="top:743.04px;font-size:12px;color:#fff;left:393.84px;">Персонализация</div><svg width="10" height="14" viewBox="0 0 10 14" style="left:557px;top:566.5px"><path d="M1.2 1 L8 7 L1.2 13" stroke="#e4e4e4" stroke-width="1.1" fill="none"/></svg><svg width="10" height="14" viewBox="0 0 10 14" style="left:557px;top:588.5px"><path d="M1.2 1 L8 7 L1.2 13" stroke="#e4e4e4" stroke-width="1.1" fill="none"/></svg><svg width="10" height="14" viewBox="0 0 10 14" style="left:557px;top:690.5px"><path d="M1.2 1 L8 7 L1.2 13" stroke="#e4e4e4" stroke-width="1.1" fill="none"/></svg><svg width="16" height="12.2" viewBox="0 0 17 13" style="left:370.5px;top:722px">
<rect x="0" y="0" width="17" height="9.6" fill="#4fc3f7"/><rect x="1.6" y="1.6" width="13.8" height="6.4" fill="#b9e8ff"/>
<rect x="7" y="9.6" width="3" height="1.6" fill="#d0d0d0"/><rect x="4.6" y="11.2" width="7.8" height="1.2" fill="#e6e6e6"/></svg><svg width="16" height="14.1" viewBox="0 0 17 15" style="left:370.5px;top:741.5px">
<rect x="0" y="3" width="17" height="9" fill="#3a20e8"/><rect x="8" y="3" width="9" height="9" fill="#39b7f5"/>
<path d="M15.5 0 L9 8 L6.6 10.4 L9.8 9.4 L16.6 1 Z" fill="#e9e9e9"/>
<rect x="7" y="12" width="3" height="1.5" fill="#d0d0d0"/><rect x="4.6" y="13.4" width="7.8" height="1.2" fill="#e6e6e6"/></svg><div class="a" style="left:0px;top:932px;width:1263px;height:40px;background:#1a0404"></div><svg width="17" height="17" viewBox="0 0 17 17" style="left:16px;top:943.5px">
<path d="M0 2.4 L7 1.4 L7 8 L0 8 Z M8 1.25 L16.6 0 L16.6 8 L8 8 Z M0 9 L7 9 L7 15.6 L0 14.6 Z M8 9 L16.6 9 L16.6 17 L8 15.75 Z" fill="#fff"/></svg><svg width="18" height="18" viewBox="63 943 18 18" style="left:63px;top:943px">
<circle cx="74.4" cy="949.4" r="5" fill="none" stroke="#fff" stroke-width="1.4"/>
<path d="M70.8 953 L64.3 959.6" stroke="#fff" stroke-width="1.5"/></svg><svg width="17" height="16" viewBox="111 943 17 16" style="left:111px;top:943px">
<rect x="113.2" y="946.6" width="9" height="8" fill="none" stroke="#fff" stroke-width="1.2"/>
<path d="M111.6 944.3 h2.4 M121.4 944.3 h2.4 M111.6 958 h2.4 M121.4 958 h2.4 M112.2 944.3 v1.6 M123.2 944.3 v1.6 M112.2 958 v-1.8 M123.2 958 v-1.8" stroke="#fff" stroke-width="1.1" fill="none"/>
<rect x="125.4" y="943.8" width="1.4" height="2.6" fill="#fff"/><rect x="125" y="947.2" width="2.4" height="3" fill="#fff"/><rect x="125.4" y="951.4" width="1.4" height="7" fill="#fff"/></svg><svg width="23" height="19" viewBox="160 942 23 19" style="left:160px;top:942px">
<path d="M160.4 943.6 h7.6 l1.6 1.8 h11.8 v3 h-21 z" fill="#e9b23c"/>
<rect x="160.4" y="945.6" width="21.4" height="14.4" fill="#f8d662"/>
<path d="M164 960.4 v-6.4 l1.4 -1.6 h11.2 l1.4 1.6 v6.4 h-3.6 v-4.4 h-6.8 v4.4 z" fill="#3d9ae3"/></svg><svg width="24" height="23" viewBox="207 941 24 23" style="left:207px;top:941px">
<path d="M213.8 947 v-3 c0 -1.2 .8 -2 2 -2 h7 c1.2 0 2 .8 2 2 v3" fill="none" stroke="#35a1e6" stroke-width="1.6"/>
<path d="M207.8 946.4 h23.2 v14.4 c0 1.6 -1 2.6 -2.6 2.6 h-18 c-1.6 0 -2.6 -1 -2.6 -2.6 z" fill="#f4f4f4"/>
<rect x="214.2" y="949.8" width="4.6" height="4.6" fill="#f25022"/><rect x="219.8" y="949.8" width="4.6" height="4.6" fill="#7fba00"/>
<rect x="214.2" y="955.4" width="4.6" height="4.6" fill="#00a4ef"/><rect x="219.8" y="955.4" width="4.6" height="4.6" fill="#ffb900"/></svg><svg width="22" height="24" viewBox="16 150 42 49" style="left:258px;top:940px">
<path d="M28.3 151 L46.2 151 L49.8 155 L54 154.6 L57.4 160 L56.4 163.2 L57.3 166 L53 182.5 C52.2 186 50.5 188.8 47.5 191 L37.3 198.8 L27 191 C24 188.8 22.3 186 21.5 182.5 L17.2 166 L18.1 163.2 L17.1 160 L20.5 154.6 L24.7 155 Z" fill="#fb3f1d"/>
<path d="M37.3 161.5 L43 160 L47 162 L50 160 L52.6 164.6 L51.8 167.4 L52.7 170 L50.6 177.4 L48.2 180.6 L43.6 183.3 L37.3 190.5 L31 183.3 L26.4 180.6 L24 177.4 L21.9 170 L22.8 167.4 L22 164.6 L24.6 160 L27.6 162 L31.6 160 Z" fill="#fff"/>
<path d="M29 168.4 L33.6 167.6 L34.6 171.4 L30.6 171 Z M45.6 168.4 L41 167.6 L40 171.4 L44 171 Z M35 177 L37.3 178.4 L39.6 177 L41.6 180.4 L37.3 183.4 L33 180.4 Z" fill="#fb3f1d"/></svg><svg width="22" height="24" viewBox="306 940 22 24" style="left:306px;top:940px">
<path d="M311 941 L325.6 941.6 L326 949 L323 958.6 L312 950 Z" fill="#c9caf0"/>
<path d="M311 941 L325.6 941.6 L324.6 944.2 L310.4 943.4 Z" fill="#e6e6fb"/>
<path d="M308.2 946 L319.6 945.2 L324.6 947.4 L324.9 960.6 L319.4 963.6 L308.8 961 Z" fill="#d7dbde"/>
<path d="M309.6 947.6 L319 947 L319 961.6 L310 959.8 Z" fill="#eef0ee"/>
<path d="M319.6 945.2 L324.6 947.4 L324.9 960.6 L319.4 963.6 Z" fill="#b9bccb"/>
<ellipse cx="314.4" cy="954.2" rx="3.6" ry="5" fill="#c4cbc6"/>
<ellipse cx="315.6" cy="951.4" rx="1.6" ry="2.2" fill="#e7c46c"/>
<ellipse cx="313.8" cy="955.6" rx="1.1" ry="1.5" fill="#f6f6f4"/>
</svg><svg width="24" height="22" viewBox="355 941 24 22" style="left:355px;top:941px">
<path d="M356.4 946.4 L361.4 945.4 L361.4 957 L356.6 957.6 Z" fill="#dcdedd"/>
<path d="M360.6 943.6 L377.6 942.4 L378 957.4 L361.4 959 Z" fill="#eceeee"/>
<path d="M362.2 945.2 L376.2 944.2 L376.6 955.6 L362.8 957 Z" fill="#d3ebf6"/>
<path d="M363 953.4 L365 952.4 L366.6 947.4 L368.2 952.6 L369.8 951.4 L371.4 947 L373 952.4 L375.8 951.4" stroke="#3a93cf" stroke-width="1" fill="none"/>
<path d="M367.4 958.4 L371.6 958 L372 960 L367.6 960.4 Z" fill="#d2d4d2"/>
<ellipse cx="369.4" cy="960.8" rx="5.3" ry="2.1" fill="#e6e6e2"/></svg><div class="a" style="left:298px;top:970px;width:40px;height:2px;background:#85c4f3"></div><div class="a" style="left:347px;top:970px;width:40px;height:2px;background:#85c4f3"></div><svg width="13" height="14" viewBox="0 0 13 14" style="left:1059px;top:945px">
<rect x=".6" y=".6" width="11.4" height="12.6" fill="#3b3b3b" stroke="#d8d8d8" stroke-width="1.1"/>
<path d="M3 1 V13 M5.4 1 V13 M7.8 1 V13 M10.2 1 V13 M1 3.6 H12 M1 6 H12 M1 8.4 H12 M1 10.8 H12" stroke="#8a8a8a" stroke-width=".5"/></svg><svg width="17" height="15" viewBox="0 0 17 15" style="left:1081px;top:945px">
<rect x="4.6" y="2.6" width="11.6" height="8" fill="none" stroke="#fff" stroke-width="1.1"/>
<rect x=".6" y=".6" width="4.6" height="5.6" fill="#1a0404" stroke="#fff" stroke-width="1.1"/>
<rect x="2" y="2" width="1.8" height="1.2" fill="#fff"/>
<path d="M2.8 6.4 V13.6 H7 M10.4 10.8 V13.6 M7.6 13.7 H13.4" stroke="#fff" stroke-width="1.1" fill="none"/></svg><svg width="17" height="14" viewBox="0 0 17 14" style="left:1105px;top:945px">
<path d="M.8 4.8 H3.6 L7 1.4 V12.6 L3.6 9.2 H.8 Z" fill="none" stroke="#fff" stroke-width="1.1" stroke-linejoin="round"/>
<path d="M9.4 4.8 C10.4 6 10.4 8 9.4 9.2 M11.6 3 C13.4 5.2 13.4 8.8 11.6 11 M13.8 1.2 C16.6 4.6 16.6 9.4 13.8 12.8" fill="none" stroke="#fff" stroke-width="1"/></svg><div class="t" style="top:945.94px;font-size:12px;color:#fff;left:1132.07px;transform:scaleX(0.9195);">РУС</div><div class="t" style="top:936.64px;font-size:12px;color:#fff;left:1180.07px;transform:scaleX(0.9288);">14:25</div><div class="t" style="top:954.74px;font-size:12px;color:#fff;left:1166.27px;transform:scaleX(0.9105);">31.03.2023</div><svg width="17" height="16" viewBox="0 0 17 16" style="left:1239px;top:944px">
<path d="M.8 .8 H15.6 V11.2 H10.6 L8.2 14 L5.8 11.2 H.8 Z" fill="none" stroke="#fff" stroke-width="1.1" stroke-linejoin="miter"/></svg><div class="a" style="left:1261px;top:572px;width:4px;height:17px;background:#fff;border:1px solid #000"></div>
</body></html>
